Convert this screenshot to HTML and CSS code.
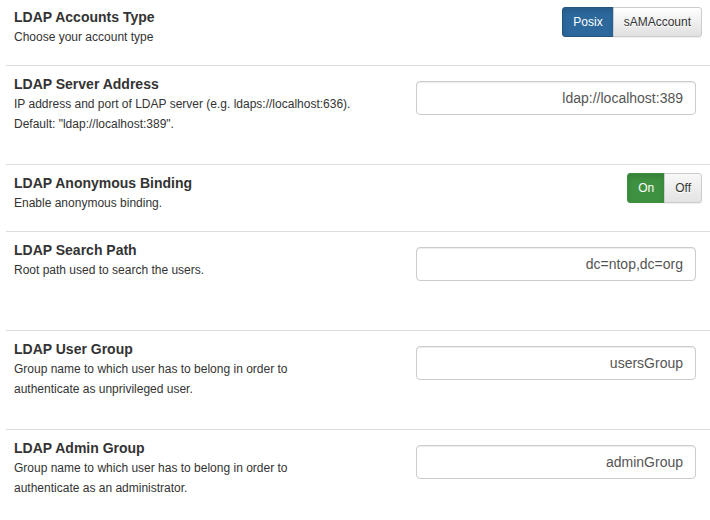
FILE: index.html
```html
<!DOCTYPE html>
<html>
<head>
<meta charset="utf-8">
<link rel="stylesheet" href="styles.css">
</head>
<body>
<div class="prefs">
  <div class="row">
    <div class="label">
      <div class="title">LDAP Accounts Type</div>
      <div class="desc">Choose your account type</div>
    </div>
    <div class="control">
      <div class="btn-group">
        <span class="btn btn-primary">Posix</span><span class="btn btn-default">sAMAccount</span>
      </div>
    </div>
  </div>
  <div class="row">
    <div class="label">
      <div class="title">LDAP Server Address</div>
      <div class="desc">IP address and port of LDAP server (e.g. ldaps://localhost:636).<br>Default: "ldap://localhost:389".</div>
    </div>
    <div class="control">
      <div class="field"><input class="form-control" type="text" value="ldap://localhost:389"></div>
    </div>
  </div>
  <div class="row">
    <div class="label">
      <div class="title">LDAP Anonymous Binding</div>
      <div class="desc">Enable anonymous binding.</div>
    </div>
    <div class="control">
      <div class="btn-group">
        <span class="btn btn-success">On</span><span class="btn btn-off">Off</span>
      </div>
    </div>
  </div>
  <div class="row">
    <div class="label">
      <div class="title">LDAP Search Path</div>
      <div class="desc">Root path used to search the users.</div>
    </div>
    <div class="control">
      <div class="field"><input class="form-control" type="text" value="dc=ntop,dc=org"></div>
    </div>
  </div>
  <div class="row">
    <div class="label">
      <div class="title">LDAP User Group</div>
      <div class="desc">Group name to which user has to belong in order to authenticate as unprivileged user.</div>
    </div>
    <div class="control">
      <div class="field"><input class="form-control" type="text" value="usersGroup"></div>
    </div>
  </div>
  <div class="row">
    <div class="label">
      <div class="title">LDAP Admin Group</div>
      <div class="desc">Group name to which user has to belong in order to authenticate as an administrator.</div>
    </div>
    <div class="control">
      <div class="field"><input class="form-control" type="text" value="adminGroup"></div>
    </div>
  </div>
</div>
</body>
</html>
```
FILE: styles.css
```css
html, body {
  margin: 0;
  padding: 0;
  background: #fff;
  overflow: hidden;
}
body {
  font-family: "Liberation Sans", Arial, Helvetica, sans-serif;
  color: #333;
}
.prefs {
  margin: -2px 0 0 6px;
}
.row {
  display: flex;
  border-top: 1px solid #ddd;
}
.label {
  width: 353px;
  box-sizing: border-box;
  padding: 8px;
  flex: none;
}
.title {
  font-size: 14px;
  font-weight: bold;
  line-height: 20px;
  color: #333;
}
.desc {
  font-size: 12px;
  line-height: 20px;
  margin-bottom: 10px;
  color: #333;
}
.control {
  flex: 1;
  padding: 8px;
  display: flex;
  justify-content: flex-end;
  align-items: flex-start;
}
.field {
  padding: 7px 6px 41px 0;
}
.form-control {
  display: block;
  box-sizing: border-box;
  width: 280px;
  height: 34px;
  padding: 6px 12px;
  font-family: "Liberation Sans", Arial, Helvetica, sans-serif;
  font-size: 14px;
  color: #555;
  text-align: right;
  background: #fff;
  border: 1px solid #ccc;
  border-radius: 4px;
  box-shadow: inset 0 1px 1px rgba(0,0,0,.075);
  outline: none;
}
.btn-group {
  display: flex;
}
.btn {
  display: block;
  box-sizing: border-box;
  height: 30px;
  padding: 5px 10px;
  font-size: 12px;
  line-height: 18px;
  border: 1px solid #ccc;
  white-space: nowrap;
}
.btn-group .btn:first-child {
  border-radius: 3px 0 0 3px;
}
.btn-group .btn:last-child {
  border-radius: 0 3px 3px 0;
  margin-left: -1px;
}
.btn-primary {
  color: #fff;
  background: #2c689c;
  border-color: #245580;
  box-shadow: inset 0 3px 5px rgba(0,0,0,.125);
}
.btn-default {
  color: #333;
  background: linear-gradient(to bottom, #fff 0, #e0e0e0 100%);
  border-color: #ccc;
  text-shadow: 0 1px 0 #fff;
  box-shadow: 0 1px 1px rgba(0,0,0,.075);
}
.btn-success {
  color: #fff;
  background: #3e9140;
  border-color: #3e8f3e;
  box-shadow: inset 0 3px 5px rgba(0,0,0,.125);
}
.btn-off {
  color: #333;
  background: linear-gradient(to bottom, #f8f8f8 0, #e3e3e3 100%);
  border-color: #ccc;
  text-shadow: 0 1px 0 #fff;
  box-shadow: 0 1px 1px rgba(0,0,0,.075);
}
```
